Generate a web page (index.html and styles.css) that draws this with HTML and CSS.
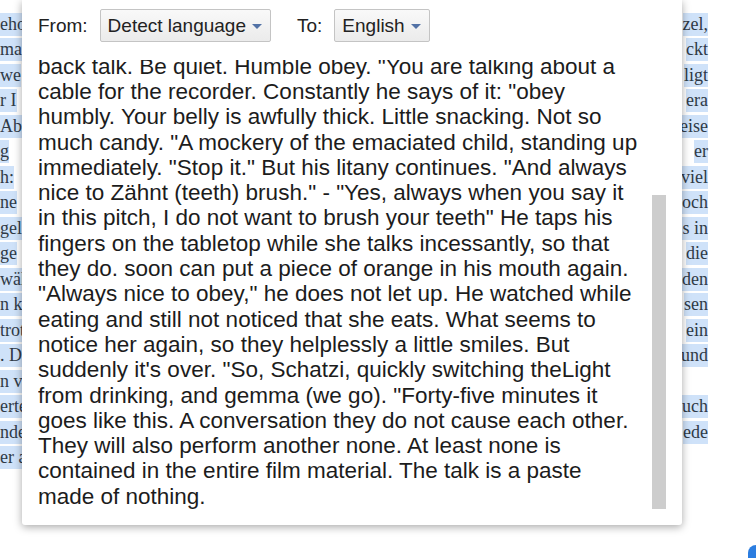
FILE: index.html
```html
<!DOCTYPE html>
<html lang="en">
<head>
    <meta charset="UTF-8">
    <title>Translate selection</title>
    <link rel="stylesheet" href="styles.css">
</head>
<body>
    <!-- page behind the popup, selected text -->
    <div class="page-text">
        <div class="row"><span class="sel">eho</span><span class="sel">zel,</span></div>
        <div class="row"><span class="sel">ma</span><span class="sel">ckt</span></div>
        <div class="row"><span class="sel">we</span><span class="sel">ligt</span></div>
        <div class="row"><span class="sel">r I</span><span class="sel">era</span></div>
        <div class="row"><span class="sel">Abe</span><span class="sel">eise</span></div>
        <div class="row"><span class="sel">g</span><span class="sel">er</span></div>
        <div class="row"><span class="sel">h:</span><span class="sel">viel</span></div>
        <div class="row"><span class="sel">ne</span><span class="sel">och</span></div>
        <div class="row"><span class="sel">gel</span><span class="sel">s in</span></div>
        <div class="row"><span class="sel">ge</span><span class="sel">die</span></div>
        <div class="row"><span class="sel">wäh</span><span class="sel">den</span></div>
        <div class="row"><span class="sel">n k</span><span class="sel">sen</span></div>
        <div class="row"><span class="sel">trot</span><span class="sel">ein</span></div>
        <div class="row"><span class="sel">. D</span><span class="sel">und</span></div>
        <div class="row"><span class="sel">n v</span></div>
        <div class="row"><span class="sel">erte</span><span class="sel">uch</span></div>
        <div class="row"><span class="sel">nde</span><span class="sel">ede</span></div>
        <div class="row"><span class="sel">er a</span></div>
    </div>

    <div class="corner-btn"></div>

    <div class="translate-popup">
        <div class="lang-bar">
            <span class="lang-label">From:</span>
            <button class="lang-select">Detect language <i class="caret"></i></button>
            <span class="lang-label to">To:</span>
            <button class="lang-select">English <i class="caret"></i></button>
        </div>

        <div class="result-box">
            <div class="result-scroll">
                <p class="result-text">back talk. Be quiet. Humble obey. "You are talking about a<br>cable for the recorder. Constantly he says of it: "obey<br>humbly. Your belly is awfully thick. Little snacking. Not so<br>much candy. "A mockery of the emaciated child, standing up<br>immediately. "Stop it." But his litany continues. "And always<br>nice to Zähnt (teeth) brush." - "Yes, always when you say it<br>in this pitch, I do not want to brush your teeth" He taps his<br>fingers on the tabletop while she talks incessantly, so that<br>they do. soon can put a piece of orange in his mouth again.<br>"Always nice to obey," he does not let up. He watched while<br>eating and still not noticed that she eats. What seems to<br>notice her again, so they helplessly a little smiles. But<br>suddenly it's over. "So, Schatzi, quickly switching theLight<br>from drinking, and gemma (we go). "Forty-five minutes it<br>goes like this. A conversation they do not cause each other.<br>They will also perform another none. At least none is<br>contained in the entire film material. The talk is a paste<br>made of nothing.</p>
            </div>
            <div class="scroll-track">
                <div class="scroll-thumb"></div>
            </div>
        </div>
    </div>
</body>
</html>
```

FILE: styles.css
```css
* {
    margin: 0;
    padding: 0;
    box-sizing: border-box;
}

body {
    position: relative;
    width: 756px;
    height: 558px;
    overflow: hidden;
    background: white;
    font-family: 'Liberation Sans', Arial, sans-serif;
}

/* text of the page behind */
.page-text {
    width: 708px;
    padding-top: 12.5px;
    font-family: 'Liberation Serif', 'Times New Roman', serif;
    font-size: 18px;
    color: #2f3a46;
}

.page-text .row {
    display: flex;
    justify-content: space-between;
    height: 23px;
    margin-bottom: 2.5px;
}

.page-text .sel {
    background: #cfe2f9;
    line-height: 23px;
}

/* edge of the round button in the page corner */
.corner-btn {
    position: absolute;
    left: 748px;
    top: 545px;
    width: 8px;
    height: 13px;
    border-top-left-radius: 14px;
    background: #2b7de0;
}

/* popup */
.translate-popup {
    position: absolute;
    left: 22px;
    top: 0;
    width: 660px;
    height: 525px;
    padding: 9px 16px 0;
    background: white;
    border-radius: 0 0 3px 3px;
    box-shadow: 0 2px 9px rgba(0, 0, 0, 0.35);
}

.lang-bar {
    display: flex;
    align-items: center;
    height: 33px;
}

.lang-label {
    font-size: 19px;
    color: #222;
    margin-right: 12px;
}

.lang-label.to {
    margin-left: 26px;
}

.lang-select {
    display: flex;
    align-items: center;
    height: 33px;
    padding: 0 8px 0 7px;
    border: 1px solid #c4c4c4;
    border-radius: 2px;
    background: linear-gradient(#f9f9f9, #ebebeb);
    font-family: inherit;
    font-size: 19px;
    color: #222;
}

.caret {
    width: 0;
    height: 0;
    margin-left: 6px;
    margin-top: 2px;
    border-left: 5px solid transparent;
    border-right: 5px solid transparent;
    border-top: 5px solid #5272a6;
}

.result-box {
    display: flex;
    height: 449px;
    margin-top: 18px;
}

.result-scroll {
    flex: 1;
    display: flex;
    flex-direction: column;
    justify-content: flex-end;
    overflow: hidden;
}

.result-text {
    font-size: 22.5px;
    line-height: 25.3px;
    color: #1c1c1c;
    white-space: nowrap;
}

.scroll-track {
    display: flex;
    flex-direction: column;
    width: 14px;
}

.scroll-thumb {
    margin-top: auto;
    height: 314px;
    background: #cdcdcd;
}
```
